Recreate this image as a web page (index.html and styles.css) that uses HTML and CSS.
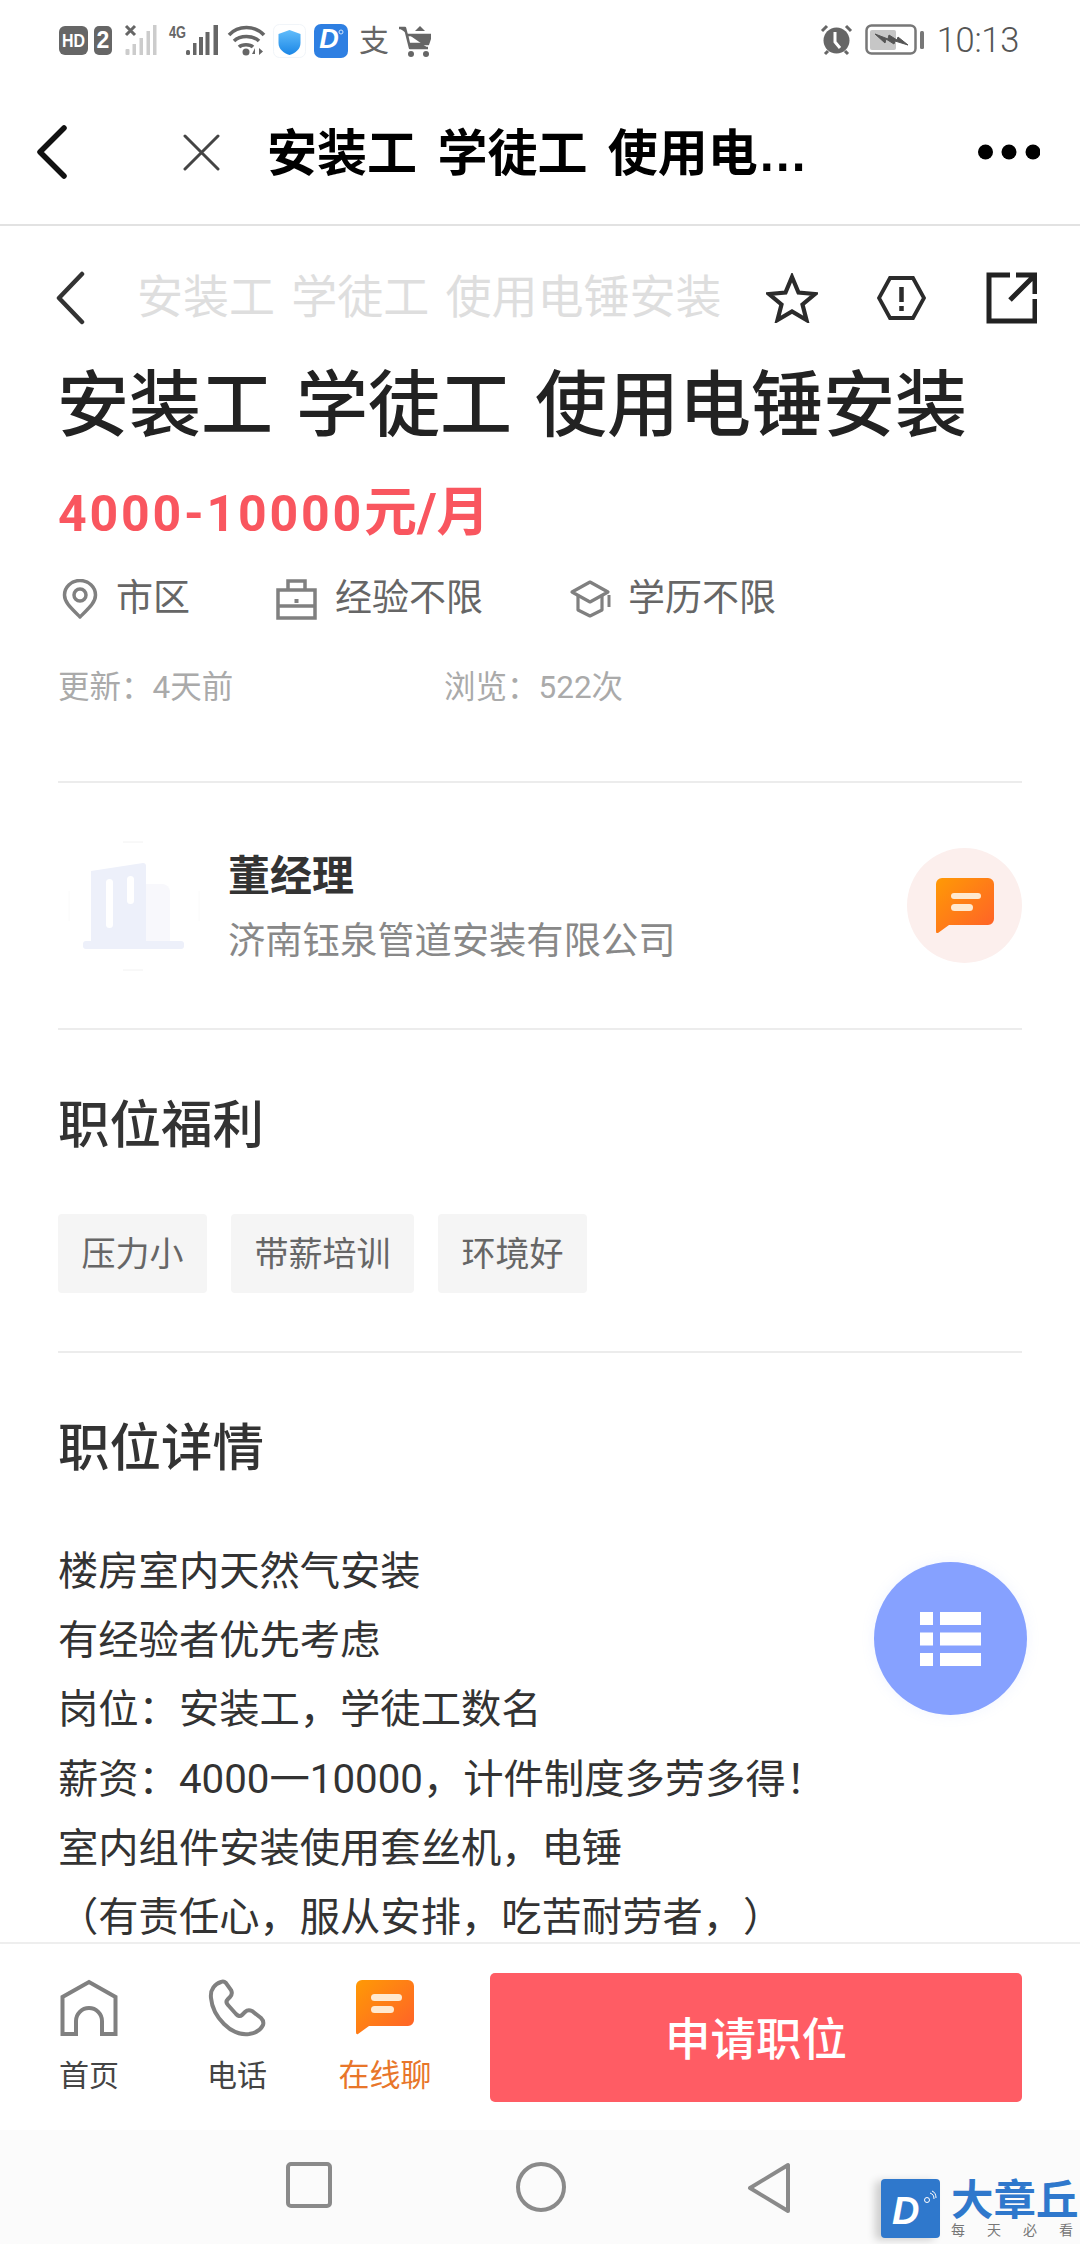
FILE: index.html
```html
<!DOCTYPE html>
<html lang="zh-CN">
<head>
<meta charset="utf-8">
<title>安装工 学徒工 使用电锤安装</title>
<link rel="stylesheet" href="styles.css">
</head>
<body>
<div class="phone">
  <header class="status">
    <svg class="status-left" width="372" height="60" viewBox="59 10 372 60">
      <rect x="59" y="26" width="29" height="29" rx="6" fill="#666"/>
      <text x="62" y="47" class="st-hd" textLength="23" lengthAdjust="spacingAndGlyphs">HD</text>
      <rect x="94" y="26" width="18" height="29" rx="5" fill="#666"/>
      <text x="103" y="48" class="st-two" text-anchor="middle">2</text>
      <path d="M126 26l9 9M135 26l-9 9" stroke="#666" stroke-width="3"/>
      <g fill="#ccc">
        <rect x="125.5" y="49" width="4" height="6" rx="1"/><rect x="132.500" y="44" width="3.500" height="11"/><rect x="139.500" y="38" width="3.500" height="17"/><rect x="146.500" y="31" width="3.500" height="24"/><rect x="153" y="25" width="3.500" height="30"/>
      </g>
      <text x="169" y="38" class="st-4g" textLength="17" lengthAdjust="spacingAndGlyphs">4G</text>
      <g fill="#666">
        <rect x="186" y="50" width="4" height="5" rx="1.500"/><rect x="193" y="43" width="3.500" height="12"/><rect x="199" y="37" width="4" height="18"/><rect x="205.500" y="32" width="4" height="23"/><rect x="213.500" y="25" width="4.500" height="30"/>
      </g>
      <g fill="none" stroke="#666" stroke-width="3.500">
        <path d="M229 35c9-10 26-10 35 0"/><path d="M234 41c6-6 19-6 25 0"/><path d="M239 47c3-3 11-3 14 0"/>
      </g>
      <circle cx="246" cy="52" r="3.500" fill="#666"/>
      <path d="M255 48l-3 6h3zM259 48v7l4-3.500z" fill="#666"/>
      <rect x="273.500" y="24.500" width="32" height="33" rx="6" fill="#fff" stroke="#f1f5f9"/>
      <defs>
        <linearGradient id="shield" x1="0" y1="0" x2="0" y2="1"><stop offset="0" stop-color="#62bdfb"/><stop offset="1" stop-color="#1a86e6"/></linearGradient>
        <linearGradient id="orange1" x1="0" y1="0" x2="1" y2="1"><stop offset="0" stop-color="#ff9a05"/><stop offset="1" stop-color="#ff5f2a"/></linearGradient>
      </defs>
      <path d="M289.500 30l11 4v9c0 6-5 10-11 12-6-2-11-6-11-12v-9z" fill="url(#shield)"/>
      <rect x="314" y="24" width="34" height="34" rx="7" fill="#2e7fe2"/>
      <text x="329" y="48" class="st-d" text-anchor="middle">D</text>
      <circle cx="341" cy="32" r="2" fill="none" stroke="#cfe3fb"/>
      <text x="374" y="51" class="st-zhi" text-anchor="middle">支</text>
      <path d="M399 28h6l5 20h18M407 35h24l-3 9h-19z" fill="#666" stroke="#666" stroke-width="2.500" stroke-linejoin="round"/>
      <path d="M415 31l5-5 5 5z" fill="#666"/>
      <circle cx="411" cy="54" r="3" fill="#666"/><circle cx="426" cy="54" r="3" fill="#666"/>
    </svg>
    <div class="status-right">
      <svg width="33" height="32" viewBox="0 0 33 32">
        <circle cx="16.500" cy="16.500" r="13" fill="#666"/>
        <path d="M15 8v10l5 6" fill="none" stroke="#fff" stroke-width="3"/>
        <path d="M2 7l5-5M31 7l-5-5M5 30l3-3M28 30l-3-3" stroke="#666" stroke-width="3"/>
      </svg>
      <svg class="battery" width="59" height="32" viewBox="0 0 59 32">
        <rect x="1.500" y="1.500" width="49" height="28" rx="5" fill="none" stroke="#777" stroke-width="2.500"/>
        <rect x="5" y="6" width="26" height="20" rx="2" fill="#c6c6c6"/>
        <path d="M10 10l13 5 1-4 8 5 1-3 10 8-13-4-1 3-8-5-1 4z" fill="#555" stroke="#555" stroke-width="1"/>
        <rect x="55" y="7" width="4" height="18" rx="1.500" fill="#777"/>
      </svg>
      <span class="clock">10:13</span>
    </div>
  </header>

  <nav class="nav">
    <svg class="nav-back" width="32" height="54" viewBox="0 0 32 54"><path d="M28 3L4 27l24 24" fill="none" stroke="#111" stroke-width="5.500" stroke-linecap="round" stroke-linejoin="round"/></svg>
    <svg class="nav-close" width="37" height="37" viewBox="0 0 37 37"><path d="M2 2l33 33M35 2L2 35" stroke="#444" stroke-width="3" stroke-linecap="round"/></svg>
    <div class="nav-title">安装工 学徒工 使用电锤安装</div>
    <svg class="nav-more" width="62" height="16" viewBox="0 0 62 16"><circle cx="7.500" cy="8" r="7.500"/><circle cx="31" cy="8" r="7.500"/><circle cx="55" cy="8" r="7.500"/></svg>
  </nav>

  <main class="content">
    <div class="subbar">
      <svg class="sub-back" width="30" height="54" viewBox="0 0 30 54"><path d="M27 3L4 27l23 24" fill="none" stroke="#333" stroke-width="4.500" stroke-linecap="round" stroke-linejoin="round"/></svg>
      <div class="sub-title">安装工 学徒工 使用电锤安装</div>
      <svg class="sub-star" width="52" height="50" viewBox="0 0 52 50"><path d="M26 4l6.500 15.500L49 21 36.500 31.500 40.500 47 26 38.500 11.500 47l4-15.500L3 21l16.500-1.500z" fill="none" stroke="#2b2b2b" stroke-width="4.200" stroke-linejoin="miter"/></svg>
      <svg class="sub-report" width="49" height="44" viewBox="0 0 49 44"><path d="M13 2h23l11 20-11 20H13L2 22z" fill="none" stroke="#2b2b2b" stroke-width="3.800"/><path d="M24.500 11v15M24.500 30v5" stroke="#2b2b2b" stroke-width="4.500"/></svg>
      <svg class="sub-share" width="51" height="52" viewBox="0 0 51 52"><path d="M24 3H3v46h46V27" fill="none" stroke="#222" stroke-width="5"/><path d="M30 3h19v19M47 5L24 28" fill="none" stroke="#222" stroke-width="5"/></svg>
    </div>
    <h1 class="job-title">安装工 学徒工 使用电锤安装</h1>
    <div class="price"><span class="price-num">4000-10000</span>元/月</div>
    <div class="meta">
      <div class="meta-item">
        <svg width="36" height="41" viewBox="0 0 36 41"><path d="M18 38C8 28 2.500 23 2.500 16a15.500 14.500 0 0 1 31 0C33.500 23 28 28 18 38z" fill="none" stroke="#808080" stroke-width="3.500" stroke-linejoin="round"/><circle cx="18" cy="16" r="6" fill="none" stroke="#808080" stroke-width="3.500"/></svg>
        <span>市区</span>
      </div>
      <div class="meta-item">
        <svg width="41" height="41" viewBox="0 0 41 41"><path d="M2 11h37v28H2zM2 27h37M12 11V2h17v9" fill="none" stroke="#808080" stroke-width="3.500"/><rect x="18.500" y="20" width="4" height="4" fill="#808080"/></svg>
        <span>经验不限</span>
      </div>
      <div class="meta-item meta-edu">
        <svg width="44" height="38" viewBox="0 0 44 38"><path d="M21 2L39 12 21 22 3 12z" fill="none" stroke="#808080" stroke-width="3.200" stroke-linejoin="round"/><path d="M9 16v14l12 6 12-6V16" fill="none" stroke="#808080" stroke-width="3.200" stroke-linejoin="round"/><path d="M40 15v12" stroke="#808080" stroke-width="3"/></svg>
        <span>学历不限</span>
      </div>
    </div>
    <div class="stats">
      <span class="stat-first">更新：4天前</span>
      <span>浏览：522次</span>
    </div>
    <hr class="rule rule-first">

    <section class="company">
      <svg class="company-logo" width="132" height="130" viewBox="0 0 132 130">
        <path d="M55 1h20M55 129h20" stroke="#f2f2f2"/>
        <path d="M1 50v30M131 50v30" stroke="#fafafa"/>
        <path d="M78 43h16a8 8 0 0 1 8 8v49H78z" fill="#f8f8fc"/>
        <path d="M23 30l52-8a3 3 0 0 1 3 3v75H23z" fill="#edf0fa"/>
        <rect x="15" y="100" width="101" height="8" rx="3" fill="#edf0fa"/>
        <rect x="38" y="38" width="7" height="49" rx="3.500" fill="#fff"/>
        <rect x="59" y="35" width="7" height="28" rx="3.500" fill="#fff"/>
      </svg>
      <div class="company-text">
        <div class="contact-name">董经理</div>
        <div class="company-name">济南钰泉管道安装有限公司</div>
      </div>
      <div class="chat-btn">
        <svg width="58" height="55" viewBox="0 0 58 55"><path d="M6 0h46a6 6 0 0 1 6 6v35a6 6 0 0 1-6 6H13L2 55q-2 1-2-2V6a6 6 0 0 1 6-6z" fill="url(#orange1)"/><rect x="15" y="15" width="30" height="6" rx="3" fill="#ffe9cf"/><rect x="15" y="26" width="22" height="7" rx="3.500" fill="#ffe9cf"/></svg>
      </div>
    </section>
    <hr class="rule">

    <h2 class="section-title first-title">职位福利</h2>
    <div class="tags">
      <span class="tag">压力小</span>
      <span class="tag">带薪培训</span>
      <span class="tag">环境好</span>
    </div>
    <hr class="rule rule-tags">

    <h2 class="section-title">职位详情</h2>
    <div class="detail">
      <p>楼房室内天然气安装</p>
      <p>有经验者优先考虑</p>
      <p>岗位：安装工，学徒工数名</p>
      <p>薪资：4000一10000，计件制度多劳多得！</p>
      <p>室内组件安装使用套丝机，电锤</p>
      <p>（有责任心，服从安排，吃苦耐劳者，）</p>
    </div>
  </main>

  <div class="fab">
    <svg width="61" height="54" viewBox="0 0 61 54" fill="#fff"><rect width="13" height="13"/><rect x="20" width="41" height="13"/><rect y="20.500" width="13" height="13"/><rect x="20" y="20.500" width="41" height="13"/><rect y="41" width="13" height="13"/><rect x="20" y="41" width="41" height="13"/></svg>
  </div>

  <footer class="actions">
    <div class="tab">
      <svg width="58" height="58" viewBox="0 0 58 58"><path d="M2.500 55V18L29 3l26.500 15v37H42V42a13 13 0 0 0-26 0v13z" fill="none" stroke="#808080" stroke-width="4"/></svg>
      <span>首页</span>
    </div>
    <div class="tab">
      <svg width="58" height="58" viewBox="0 0 58 58"><path d="M13 3c-6 2-11 7-10 16 1 11 6 19 13 26s16 11 25 10c7-1 12-5 14-9 1-3 0-5-2-7l-9-7c-2-1-5-1-7 1l-3 3c-2 2-4 1-6-1l-8-9c-2-2-2-4 0-6l2-2c2-2 2-5 1-7l-5-7c-1-1-3-2-5-1z" fill="none" stroke="#808080" stroke-width="4"/></svg>
      <span>电话</span>
    </div>
    <div class="tab tab-active">
      <svg width="58" height="58" viewBox="0 0 58 58"><path d="M6 1h46a6 6 0 0 1 6 6v34a6 6 0 0 1-6 6H13L2 55q-2 1-2-2V7a6 6 0 0 1 6-6z" fill="url(#orange1)"/><rect x="15" y="15" width="31" height="7" rx="3.500" fill="#ffe9cf"/><rect x="15" y="27" width="23" height="7" rx="3.500" fill="#ffe9cf"/></svg>
      <span>在线聊</span>
    </div>
    <button class="apply"><span class="apply-label">申请职位</span></button>
  </footer>

  <div class="sysnav">
    <svg width="46" height="46" viewBox="0 0 46 46"><rect x="2" y="2" width="42" height="42" rx="3" fill="none" stroke="#8a8a8a" stroke-width="4"/></svg>
    <svg width="50" height="50" viewBox="0 0 50 50"><circle cx="25" cy="25" r="23" fill="none" stroke="#8a8a8a" stroke-width="4"/></svg>
    <svg width="44" height="52" viewBox="0 0 44 52"><path d="M41 3v46L3 26z" fill="none" stroke="#8a8a8a" stroke-width="4" stroke-linejoin="round"/></svg>
  </div>

  <div class="watermark">
    <div class="wm-logo">
      <span class="wm-d">D</span>
      <svg class="wm-waves" width="14" height="14" viewBox="0 0 14 14"><circle cx="4" cy="10" r="2.500" fill="none" stroke="#fff"/><path d="M7 3c3 1 4 3 4 6M9 1c3 1 4 4 4 7" fill="none" stroke="#fff"/></svg>
    </div>
    <div class="wm-text">
      <div class="wm-name">大章丘</div>
      <div class="wm-slogan"><span>每</span><span>天</span><span>必</span><span>看</span></div>
    </div>
  </div>
</div>
</body>
</html>
```
FILE: styles.css
```css
* { box-sizing: border-box; }
html, body { margin: 0; padding: 0; background: #fff; }
body { font-family: Roboto, "Noto Sans CJK SC", sans-serif; color: #333; text-spacing-trim: space-all; }
.phone { position: relative; width: 1080px; height: 2244px; overflow: hidden; display: flex; flex-direction: column; background: #fff; }

.status { height: 75px; flex: none; display: flex; align-items: flex-start; justify-content: space-between; padding: 10px 61px 0 59px; }
.status svg { display: block; }
.status-right { display: flex; align-items: center; height: 40px; margin-top: 10px; }
.battery { margin-left: 12px; }
.clock { font-size: 34.500px; font-weight: 300; color: #555; margin-left: 13px; letter-spacing: -0.3px; }
.st-hd { font: 700 18px "Liberation Sans", sans-serif; fill: #fff; }
.st-two { font: 700 23px "Liberation Sans", sans-serif; fill: #fff; }
.st-4g { font: 700 16px "Liberation Sans", sans-serif; fill: #666; }
.st-d { font: italic 700 27px "Liberation Sans", sans-serif; fill: #fff; }
.st-zhi { font: 400 30px "Noto Sans CJK SC", sans-serif; fill: #666; }

.nav { height: 151px; flex: none; display: flex; align-items: center; border-bottom: 2px solid #e2e2e2; padding: 5px 40px 0 36px; }
.nav-close { margin-left: 115px; }
.nav-title { width: 552px; margin: 3px 0 0 47px; font: 700 50px "Liberation Sans", "Noto Sans CJK SC", sans-serif; color: #000; white-space: nowrap; overflow: hidden; text-overflow: ellipsis; word-spacing: 6.500px; line-height: 70px; }
.nav-more { margin-left: auto; fill: #000; }

.content { flex: 1; min-height: 0; overflow: hidden; padding: 0 58px; }
.subbar { height: 143px; display: flex; align-items: center; margin-right: -15px; }
.sub-back { margin-left: -3px; }
.sub-title { font: 400 46px/60px "Liberation Sans", "Noto Sans CJK SC", sans-serif; color: #dedede; margin: -1px 0 0 52px; word-spacing: 3.500px; white-space: nowrap; width: 629px; }
.sub-report { margin-left: 59px; }
.sub-share { margin-left: 60px; }

.job-title { margin: 0 0 0 -1px; font: 500 72px/72px "Liberation Sans", "Noto Sans CJK SC", sans-serif; color: #222; white-space: nowrap; word-spacing: 3px; }
.price { margin-top: 42px; height: 60px; line-height: 60px; font-size: 53px; font-weight: 700; color: #f9565f; }
.price-num { font-size: 50px; letter-spacing: 2.800px; }
.meta { margin-top: 36px; height: 40px; display: flex; gap: 86px; padding-left: 4px; }
.meta-item { display: flex; align-items: center; gap: 18px; font-size: 37px; line-height: 40px; color: #666; }
.meta-edu { gap: 15px; }
.meta-item svg { flex: none; display: block; }
.stats { margin-top: 49px; height: 40px; line-height: 40px; font-size: 31.500px; color: #aaa; display: flex; }
.stat-first { width: 386px; }

.rule { margin: 0; border: 0; height: 2px; background: #ececec; }
.rule-first { margin-top: 73px; }
.rule-tags { margin-top: 58px; }

.company { height: 245px; display: flex; align-items: center; }
.company-logo { flex: none; margin-left: 10px; }
.company-text { margin: 6px 0 0 28px; flex: 1; }
.contact-name { font-size: 42px; font-weight: 700; line-height: 50px; color: #333; }
.company-name { font-size: 37.300px; line-height: 50px; margin-top: 14px; color: #888; }
.chat-btn { width: 115px; height: 115px; border-radius: 50%; background: #fcefed; display: flex; align-items: center; justify-content: center; }
.chat-btn svg { display: block; }

.section-title { margin: 61px 0 0; font-size: 51.500px; line-height: 70px; font-weight: 500; color: #333; }
.tags { margin-top: 53px; display: flex; gap: 24px; }
.tag { height: 79px; line-height: 81px; padding: 0 23.500px; background: #f5f5f5; border-radius: 4px; font-size: 34px; color: #666; }
.detail { margin-top: 53px; font-size: 40.300px; line-height: 69.200px; color: #333; white-space: nowrap; }
.detail p { margin: 0; }

.fab { position: absolute; left: 874px; top: 1562px; width: 153px; height: 153px; border-radius: 50%; background: #86a1ff; display: flex; align-items: center; justify-content: center; box-shadow: 0 0 14px rgba(134, 161, 255, 0.12); }
.fab svg { display: block; }

.actions { height: 188px; flex: none; display: flex; align-items: flex-start; border-top: 2px solid #eee; padding: 0 58px 0 15px; background: #fff; position: relative; }
.tab { width: 148px; padding-top: 35px; display: flex; flex-direction: column; align-items: center; font-size: 30px; line-height: 40px; color: #444; }
.tab svg { display: block; margin-bottom: 19px; }
.tab-active { color: #e8762a; font-size: 31px; }
.apply { flex: 1; height: 129px; margin: 29px 0 0 31px; border: 0; border-radius: 5px; background: #ff5c64; color: #fff; font: 500 45.500px "Noto Sans CJK SC", sans-serif; padding: 0 0 3px; }

.sysnav { height: 114px; flex: none; background: #fbfbfb; position: relative; display: flex; align-items: flex-start; padding: 32px 0 0 286px; }
.sysnav svg { display: block; }
.sysnav svg:nth-child(2) { margin-left: 184px; }
.sysnav svg:nth-child(3) { margin-left: 181px; }

.watermark { position: absolute; left: 881px; top: 2179px; display: flex; }
.wm-logo { position: relative; width: 59px; height: 59px; background: #2f78cc; border-radius: 4px; box-shadow: -6px 2px 8px rgba(0, 0, 0, 0.18); }
.wm-d { position: absolute; left: 11px; top: 13px; font: italic 700 38px/38px "Liberation Sans", sans-serif; color: #fff; }
.wm-waves { position: absolute; right: 3px; top: 11px; }
.wm-text { margin-left: 11px; width: 124px; }
.wm-name { height: 36px; font: 700 42.500px/36px "Noto Sans CJK SC", sans-serif; color: #2f78cc; white-space: nowrap; }
.wm-slogan { display: flex; justify-content: space-between; height: 18px; font-size: 14px; line-height: 18px; color: #777; padding-right: 2px; margin-top: 6px; }
```
